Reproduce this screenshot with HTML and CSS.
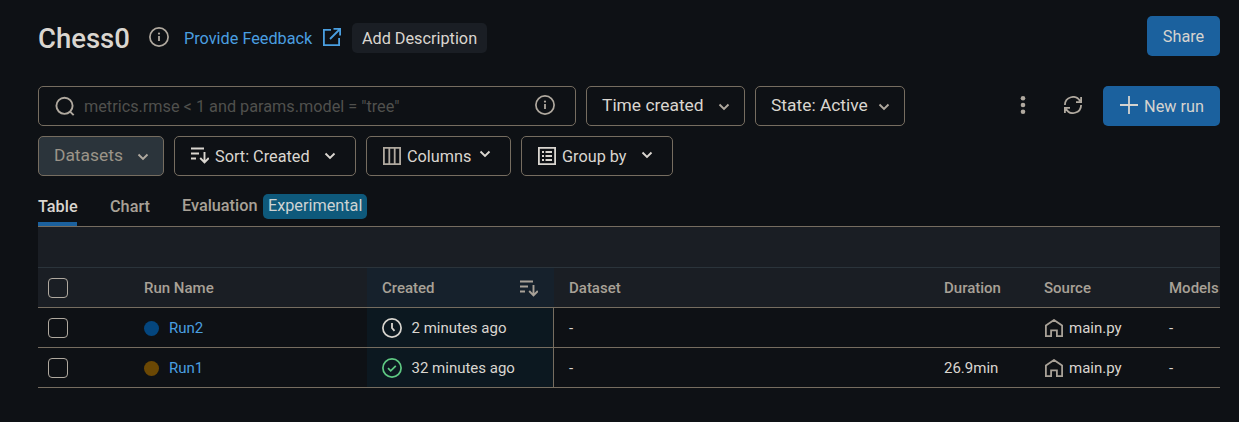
FILE: index.html
```html
<!DOCTYPE html>
<html lang="en">
<head>
<meta charset="utf-8">
<title>Chess0</title>
<link rel="stylesheet" href="styles.css">
</head>
<body>
<svg class="defs" width="0" height="0">
  <symbol id="chevron" viewBox="0 0 12 8"><path d="M1.500 1.500 6 6l4.500-4.500" fill="none" stroke="currentColor" stroke-width="1.900"/></symbol>
  <symbol id="info" viewBox="0 0 20 20"><circle cx="10" cy="10" r="9.100" fill="none" stroke="currentColor" stroke-width="1.700"/><path d="M10 9v5" stroke="currentColor" stroke-width="1.800"/><circle cx="10" cy="6.600" r="1.100" fill="currentColor"/></symbol>
  <symbol id="sort" viewBox="0 0 18 17"><path d="M0 1.500h13M0 6.500h8M0 11.500h5M13.500 5v10M9.200 11l4.300 4.400 4.300-4.400" fill="none" stroke="currentColor" stroke-width="1.900"/></symbol>
  <symbol id="house" viewBox="0 0 18 18"><path d="M.9 17.100V6.500L9 1l8.100 5.500v10.600h-5.200v-5.800H6.100v5.800z" fill="none" stroke="currentColor" stroke-width="1.800"/></symbol>
</svg>
<main class="page">
  <header class="header">
    <h1 class="title">Chess0</h1>
    <svg class="title-info"><use href="#info"/></svg>
    <a class="feedback">Provide Feedback</a>
    <svg class="external" viewBox="0 0 18 18"><path d="M8 1.900H.9v15.200h15.200V10M7 11 16.500 1.500M10.500.9h6.600v6.600" fill="none" stroke="currentColor" stroke-width="1.800"/></svg>
    <button class="describe">Add Description</button>
    <button class="primary share">Share</button>
  </header>
  <section class="toolbar">
    <div class="search">
      <svg class="glass" viewBox="0 0 20 20"><circle cx="9.500" cy="9.800" r="8.100" fill="none" stroke="currentColor" stroke-width="1.900"/><path d="m14.800 15.300 3.900 3.900" stroke="currentColor" stroke-width="1.900"/></svg>
      <span class="placeholder">metrics.rmse &lt; 1 and params.model = "tree"</span>
      <svg class="search-info"><use href="#info"/></svg>
    </div>
    <button class="control time raised"><span>Time created</span><svg class="chev"><use href="#chevron"/></svg></button>
    <button class="control state raised"><span>State: Active</span><svg class="chev"><use href="#chevron"/></svg></button>
    <svg class="dots" viewBox="0 0 6 18"><circle cx="3" cy="2.300" r="2.300"/><circle cx="3" cy="9" r="2.300"/><circle cx="3" cy="15.700" r="2.300"/></svg>
    <svg class="refresh" viewBox="0 0 18 18"><path d="M.9 9A8.100 8.100 0 0 1 16 5M17.100 9A8.100 8.100 0 0 1 2 13M17.100 1v5.100H12M.9 17v-5.100H6" fill="none" stroke="currentColor" stroke-width="1.800"/></svg>
    <button class="primary new-run"><svg class="plus" viewBox="0 0 18 18"><path d="M9 0v18M0 9h18" stroke="currentColor" stroke-width="1.800"/></svg><span>New run</span></button>
  </section>
  <section class="toolbar second">
    <button class="control datasets raised"><span>Datasets</span><svg class="chev"><use href="#chevron"/></svg></button>
    <button class="control sort bright"><svg class="sort-icon"><use href="#sort"/></svg><span>Sort: Created</span><svg class="chev"><use href="#chevron"/></svg></button>
    <button class="control columns bright"><svg class="box-icon muted" viewBox="0 0 18 18"><path d="M.9.9h16.200v16.200H.9zM6.300 1v16M11.700 1v16" fill="none" stroke="currentColor" stroke-width="1.800"/></svg><span>Columns</span><svg class="chev"><use href="#chevron"/></svg></button>
    <button class="control group bright"><svg class="box-icon" viewBox="0 0 18 18"><path d="M.9.9h16.200v16.200H.9zM4 5h2M4 9h2M4 13h2M7.500 5H14M7.500 9H14M7.500 13H14" fill="none" stroke="currentColor" stroke-width="1.800"/></svg><span>Group by</span><svg class="chev"><use href="#chevron"/></svg></button>
  </section>
  <nav class="tabs">
    <a class="tab active">Table</a>
    <a class="tab chart">Chart</a>
    <a class="tab evaluation">Evaluation <span class="tag">Experimental</span></a>
  </nav>
  <div class="table">
    <div class="group-row"></div>
    <div class="row head">
      <div class="cell check"><i class="box"></i></div>
      <div class="cell">Run Name</div>
      <div class="cell created"><span>Created</span><svg class="sort-icon"><use href="#sort"/></svg></div>
      <div class="cell dataset">Dataset</div>
      <div class="cell">Duration</div>
      <div class="cell">Source</div>
      <div class="cell">Models</div>
    </div>
    <div class="row">
      <div class="cell check"><i class="box"></i></div>
      <div class="cell"><i class="dot blue"></i><a class="link">Run2</a></div>
      <div class="cell created"><svg class="status" viewBox="0 0 20 20"><path d="M10 5v5l2.500 2.800" fill="none" stroke="currentColor" stroke-width="1.800"/><circle cx="10" cy="10" r="9.100" fill="none" stroke="currentColor" stroke-width="1.700"/></svg>2 minutes ago</div>
      <div class="cell dataset">-</div>
      <div class="cell"></div>
      <div class="cell"><svg class="house"><use href="#house"/></svg>main.py</div>
      <div class="cell">-</div>
    </div>
    <div class="row">
      <div class="cell check"><i class="box"></i></div>
      <div class="cell"><i class="dot brown"></i><a class="link">Run1</a></div>
      <div class="cell created"><svg class="status done" viewBox="0 0 20 20"><path d="m6 10.200 2.700 2.700L13.800 7.800" fill="none" stroke="currentColor" stroke-width="1.700"/><circle cx="10" cy="10" r="9.100" fill="none" stroke="currentColor" stroke-width="1.700"/></svg>32 minutes ago</div>
      <div class="cell dataset">-</div>
      <div class="cell">26.9min</div>
      <div class="cell"><svg class="house"><use href="#house"/></svg>main.py</div>
      <div class="cell">-</div>
    </div>
  </div>
</main>
</body>
</html>
```
FILE: styles.css
```css
* { box-sizing: border-box; }
body { margin: 0; background: #0e1115; color: #dad6d0; font: 16.25px/20px Roboto, sans-serif; }
button { font: inherit; color: inherit; margin: 0; border: 0; border-radius: 5px; white-space: nowrap; }
svg { display: block; flex: none; }
.defs { position: absolute; }
.page { width: 1182px; margin-left: 38px; padding-top: 16px; }
.header { display: flex; height: 40px; align-items: flex-start; }
.title { margin: 3px 0 0; width: 111px; font-size: 27.5px; line-height: 40px; font-weight: 500; }
.title-info { width: 20px; height: 20px; margin-top: 11px; color: #b0a99f; }
.feedback { width: 138px; margin: 13px 0 0 15px; color: #4a9fe0; white-space: nowrap; }
.external { width: 18px; height: 18px; margin-top: 12px; margin-left: 1px; color: #4a9fe0; }
.describe { margin: 7px 0 0 11px; width: 135px; height: 30px; padding: 1px 0 0; background: #1a1e24; }
.primary { height: 40px; background: #1b619e; color: #d5d3cf; }
.share { width: 73px; margin-left: auto; padding: 2px 0 0; }
.toolbar { display: flex; gap: 10px; margin-top: 30px; height: 40px; }
.second { margin-top: 10px; }
.search { width: 538px; display: flex; align-items: center; border: 1px solid #766d60; border-radius: 5px; padding: 0 20px 0 16px; }
.glass { width: 20px; height: 20px; color: #b0a99f; }
.placeholder { margin-left: 9px; padding-top: 2px; color: #50504d; flex: 1; }
.search-info { width: 20px; height: 20px; margin-top: -2px; color: #b0a99f; }
.control { display: flex; align-items: center; border: 1px solid #766d60; background: transparent; padding: 0 15px 0 15px; }
.raised { padding-right: 15px; padding-bottom: 2px; font-size: 17.4px; }
.chev { width: 12px; height: 8px; margin-left: auto; color: #b0a99f; }
.raised .chev { margin-top: 3px; }
.state.raised { padding-right: 14px; }
.datasets.raised { padding-right: 14px; }
.raised.time { padding-right: 14px; }
.bright .chev { color: #dad6d0; }
.time { width: 159px; }
.state { width: 150px; }
.dots { width: 6px; height: 18px; margin: 10px 0 0 105px; fill: #b0a99f; }
.refresh { width: 18px; height: 18px; margin: 10px 0 0 28px; color: #b0a99f; }
.new-run { width: 117px; margin-left: auto; padding: 0 16px 0 17px; display: flex; align-items: center; justify-content: space-between; }
.new-run span { padding-top: 1px; }
.plus { width: 18px; height: 18px; margin-top: -2px; }
.datasets { width: 126px; background: #2b343b; color: #9b9489; }
.sort { width: 182px; padding-right: 19px; }
.sort .chev { margin-top: -1px; }
.sort-icon { width: 18px; height: 17px; }
.sort-icon + span, .box-icon + span { margin-left: 6px; padding-top: 1px; }
.sort .sort-icon { margin: -2px 0 0 1px; }
.columns { width: 145px; }
.columns .chev { margin-top: -4px; margin-right: 4px; }
.group { width: 152px; }
.group .chev { margin-right: 4px; margin-top: -2px; }
.box-icon { width: 18px; height: 18px; margin-left: 1px; margin-top: -1px; }
.muted { color: #b0a99f; }
.tabs { display: flex; height: 51px; border-bottom: 1px solid #766d60; font-weight: 500; color: #a8a197; }
.tab { display: block; padding-top: 21px; white-space: nowrap; }
.active { color: #dad6d0; width: 39px; border-bottom: 4px solid #1b619e; }
.chart { margin-left: 33px; width: 72px; }
.evaluation { display: flex; gap: 5.5px; padding-top: 18px; line-height: 24px; }
.tag { height: 25px; padding: 0 4.5px 0 5px; line-height: 24px; background: #0e597b; color: #cdd3d3; border-radius: 5px; font-weight: 400; }
.table { overflow: hidden; font-size: 15px; }
.group-row { height: 41px; background: #1a1e24; border-bottom: 1px solid #2b343b; }
.row { display: grid; grid-template-columns: 106px 223px 187px 390px 100px 125px 51px; height: 40px; border-bottom: 1px solid #766d60; }
.head { background: #1a1e24; color: #a8a197; font-weight: 500; }
.cell { display: flex; align-items: center; padding-top: 1px; white-space: nowrap; }
.check { padding: 1px 0 0 10px; }
.box { width: 20px; height: 20px; border: 1.5px solid #b0a99f; border-radius: 4px; }
.created { background: #0c1820; border-right: 1px solid #766d60; padding-left: 15px; }
.head .created { background: #16212c; border-color: transparent; }
.head .created .sort-icon { margin-left: auto; margin-right: 15px; }
.dataset { padding-left: 15px; }
.dot { width: 15px; height: 15px; border-radius: 50%; margin-right: 10px; }
.blue { background: #04467e; }
.brown { background: #6b4804; }
.link { color: #4a9fe0; }
.status { width: 20px; height: 20px; margin-right: 9.5px; }
.done { color: #5fc983; }
.house { width: 18px; height: 18px; margin-left: 1px; margin-right: 6px; color: #a8a197; }
```
